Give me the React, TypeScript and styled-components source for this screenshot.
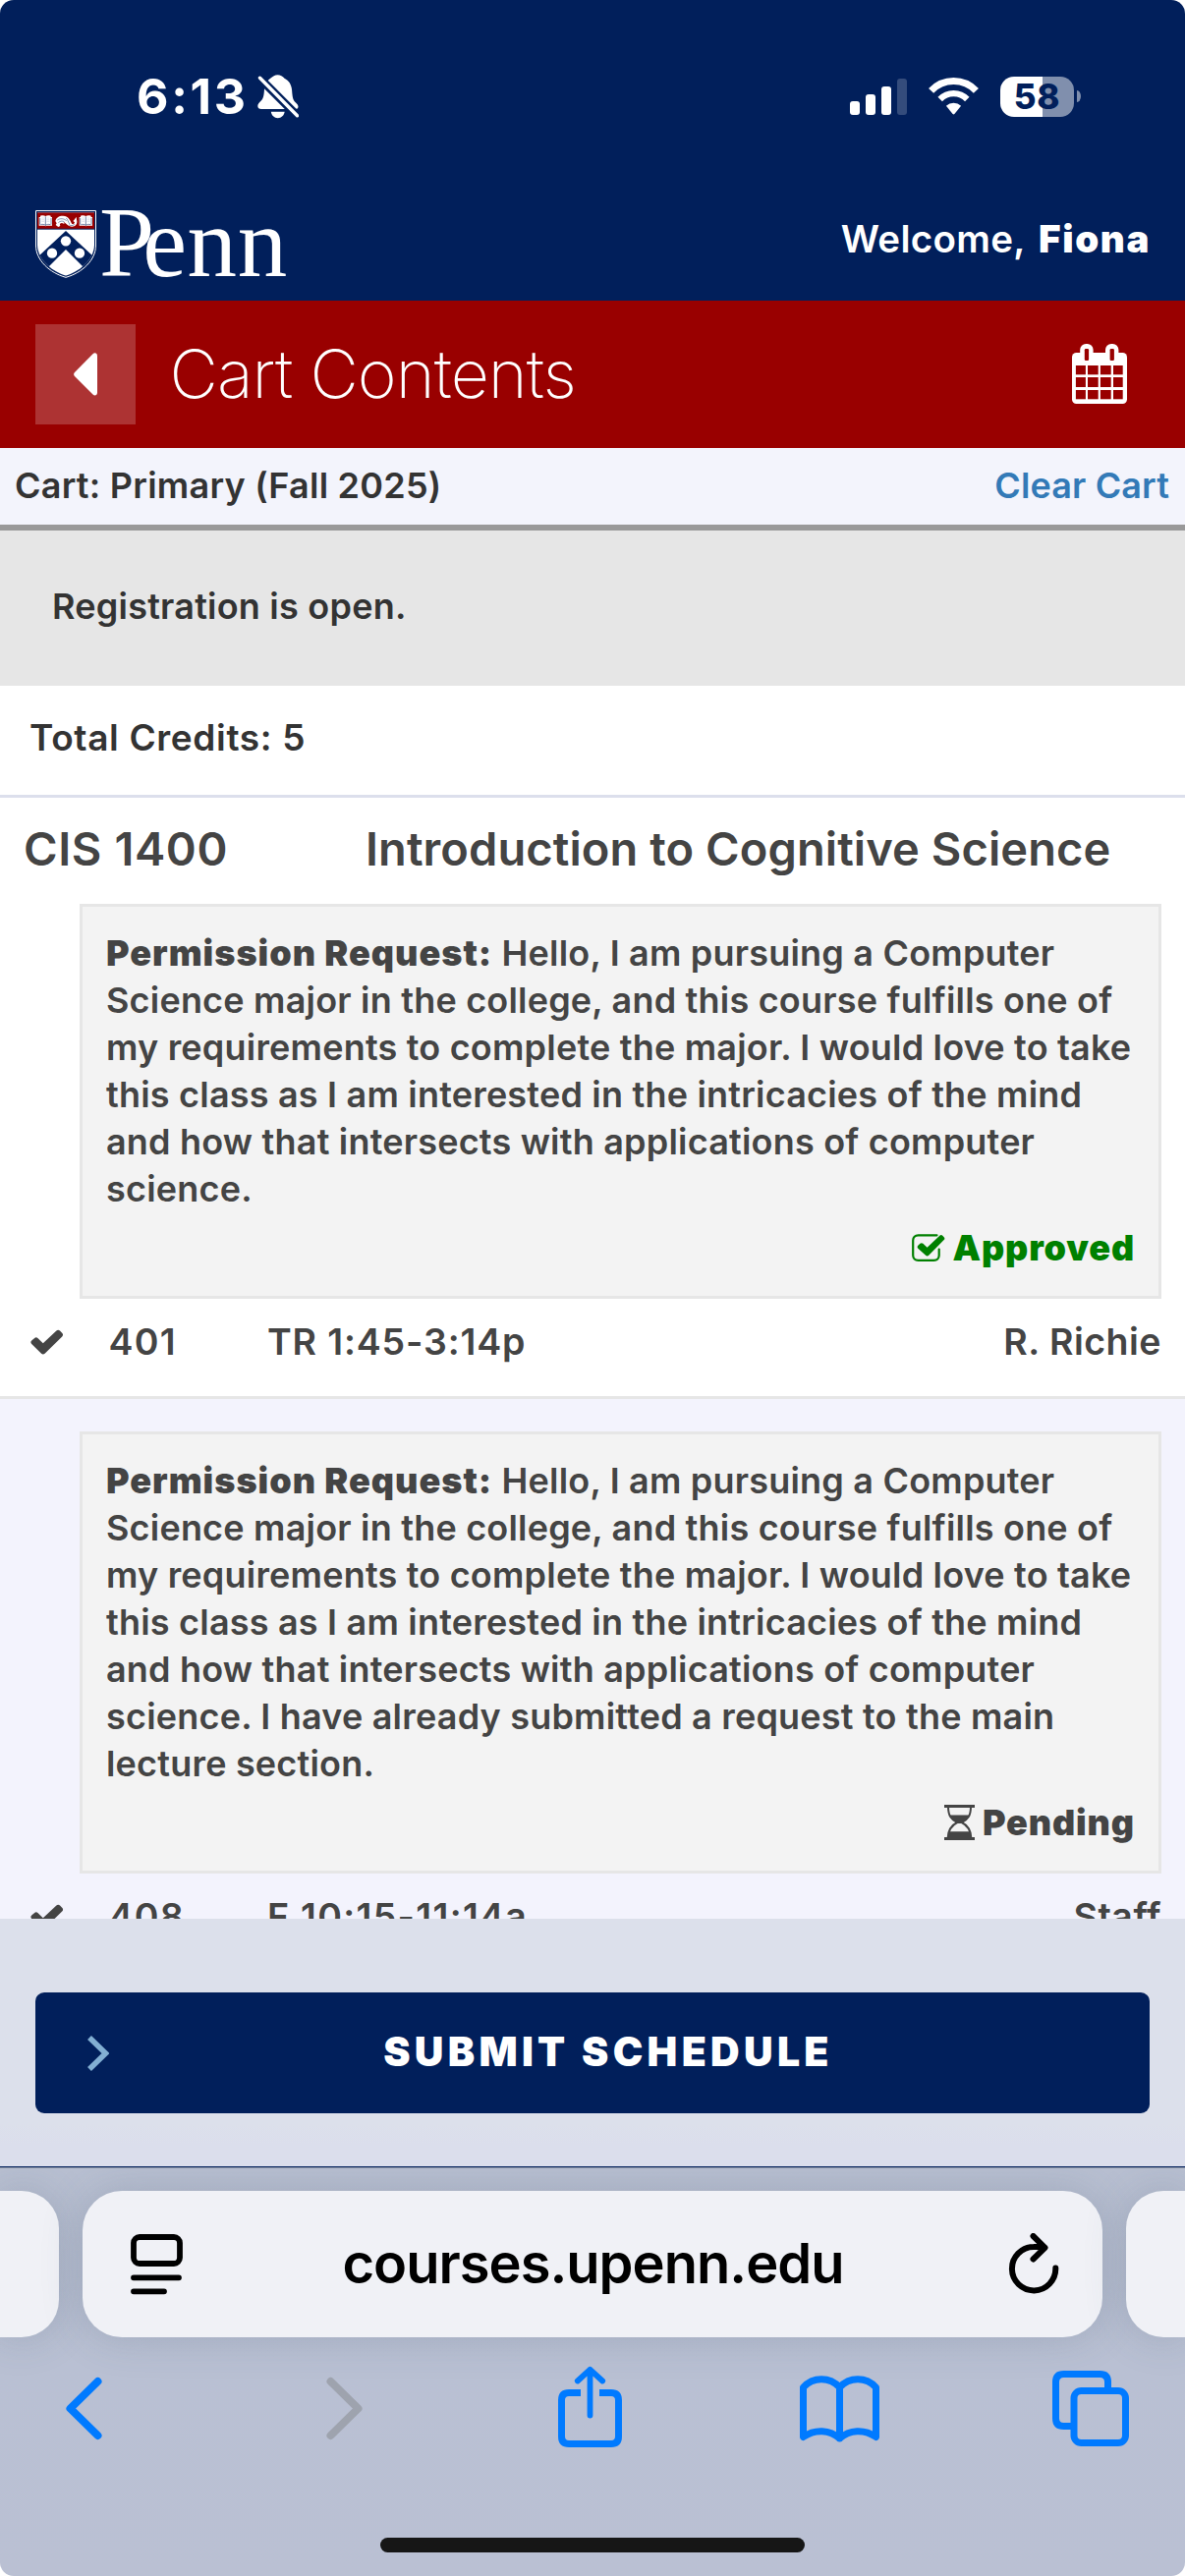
import React from 'react';
import styled, { createGlobalStyle } from 'styled-components';

const navy = '#011f5b';
const ink = '#444444';
const blue = '#007aff';

const GlobalStyle = createGlobalStyle`
  html, body { margin: 0; padding: 0; background: #ffffff; }
  *, *::before, *::after { box-sizing: border-box; }
  body { font-family: Inter, 'Liberation Sans', sans-serif; font-weight: 600; }
`;

const Screen = styled.div`
  width: 1206px;
  height: 2622px;
  display: flex;
  flex-direction: column;
  overflow: hidden;
  border-radius: 14px;
  background: #ffffff;
`;

/* ---------- header ---------- */

const Header = styled.header`
  height: 306px;
  flex: none;
  background: ${navy};
  color: #ffffff;
`;

const StatusBar = styled.div`
  height: 190px;
  padding: 6px 106px 0 139px;
  display: flex;
  align-items: center;
`;

const Clock = styled.span`
  width: 123px;
  font-size: 50px;
  font-weight: 700;
  letter-spacing: 2.7px;
  line-height: 60px;
`;

const StatusIcons = styled.div`
  margin-left: auto;
  display: flex;
  align-items: center;
`;

const SignalIcon = styled.svg`
  margin-right: 22px;
`;

const WifiIcon = styled.svg`
  margin-right: 22px;
`;

const Battery = styled.div`
  width: 75px;
  height: 41px;
  border-radius: 14px;
  background: linear-gradient(to right, #ffffff 43px, #808fad 43px);
  color: ${navy};
  display: flex;
  align-items: center;
  justify-content: center;
  font-size: 35px;
  font-weight: 800;
  letter-spacing: 0.6px;
  line-height: 41px;
`;

const BatteryTip = styled.div`
  width: 4px;
  height: 12px;
  margin-left: 3px;
  border-radius: 0 4px 4px 0 / 0 6px 6px 0;
  background: #808fad;
`;

const BrandRow = styled.div`
  height: 116px;
  padding: 0 35px 0 36px;
  display: flex;
  align-items: center;
`;

const Wordmark = styled.span`
  display: inline-block;
  margin: 0 auto 2px 3px;
  font-family: 'Liberation Serif', serif;
  font-weight: 400;
  font-size: 101px;
  line-height: 112px;
  letter-spacing: 0.6px;
  &::first-letter { letter-spacing: -12px; }
`;

const Welcome = styled.span`
  margin-bottom: 10px;
  font-size: 38.5px;
  line-height: 46px;
  letter-spacing: 0.3px;
`;

const UserName = styled.strong`
  margin-left: 4px;
  font-weight: 900;
  letter-spacing: 1.6px;
`;

/* ---------- title bar ---------- */

const TitleBar = styled.div`
  height: 150px;
  flex: none;
  padding: 0 59px 0 36px;
  display: flex;
  align-items: center;
  background: #990000;
  color: #ffffff;
`;

const BackButton = styled.button`
  width: 102px;
  height: 102px;
  padding: 0;
  border: 0;
  background: #ad3333;
  display: flex;
  align-items: center;
  justify-content: center;
`;

const Title = styled.h1`
  margin: 0 auto 2px 34.5px;
  font-size: 68px;
  font-weight: 200;
  letter-spacing: -0.93px;
  line-height: 82px;
`;

const CartBar = styled.div`
  height: 84px;
  flex: none;
  padding: 0 16px 2px 15px;
  display: flex;
  align-items: center;
  justify-content: space-between;
  background: #f3f4fc;
  border-bottom: 6px solid #999999;
  font-size: 36px;
  letter-spacing: 0.24px;
  line-height: 44px;
  color: #333333;
`;

const ClearLink = styled.a`
  color: #337ab7;
  letter-spacing: 0.12px;
`;

/* ---------- scrolling content ---------- */

const Scroller = styled.main`
  height: 1413px;
  flex: none;
  overflow: hidden;
  color: ${ink};
`;

const Notice = styled.div`
  height: 158px;
  padding: 0 53px 5px;
  display: flex;
  align-items: center;
  background: #e6e6e6;
  color: #333333;
  font-size: 36px;
  letter-spacing: 0.22px;
  line-height: 44px;
`;

const Credits = styled.div`
  height: 114px;
  padding: 0 30px 5px;
  display: flex;
  align-items: center;
  border-bottom: 3px solid #dcdfec;
  color: #333333;
  font-size: 37px;
  letter-spacing: 0.64px;
  line-height: 44px;
`;

const CourseHeading = styled.h2`
  margin: 0;
  height: 108px;
  padding: 0 0 4px 24px;
  display: grid;
  grid-template-columns: 348px 1fr;
  align-items: center;
  font-size: 47px;
  font-weight: 600;
  line-height: 56px;
  letter-spacing: 0.08px;
`;

const CourseCode = styled.span`
  letter-spacing: 0.6px;
`;

const Section = styled.section<{ $alt?: boolean }>`
  padding-top: ${p => (p.$alt ? 33 : 0)}px;
  background: ${p => (p.$alt ? '#f3f3fd' : '#ffffff')};
  border-bottom: 3px solid #e6e6e6;
`;

const RequestBox = styled.div`
  margin: 0 24px 0 81px;
  padding: 23px 20px 25px 24px;
  border: 3px solid #e6e6e6;
  background: #f3f3f3;
`;

const RequestText = styled.p`
  margin: 0;
  font-size: 36px;
  line-height: 48px;
  letter-spacing: 0.2px;
`;

const RequestLabel = styled.strong`
  font-weight: 900;
  letter-spacing: 1px;
`;

const Status = styled.div<{ $color: string }>`
  margin-top: 12px;
  padding-right: 4px;
  display: flex;
  justify-content: flex-end;
  align-items: center;
  gap: 8px;
  color: ${p => p.$color};
  font-size: 36px;
  font-weight: 900;
  line-height: 48px;
  letter-spacing: 0.85px;
`;

const SectionRow = styled.div`
  height: 99px;
  padding: 0 24px 11px 31px;
  display: grid;
  grid-template-columns: 79.5px 161.5px 1fr auto;
  align-items: center;
  font-size: 37.5px;
  line-height: 46px;
`;

const SectionNumber = styled.span`
  letter-spacing: 1.3px;
`;

const MeetingTime = styled.span<{ $tracking: number }>`
  letter-spacing: ${p => p.$tracking}px;
`;

const Teacher = styled.span`
  letter-spacing: 0.5px;
`;

/* ---------- submit footer ---------- */

const Footer = styled.div`
  height: 253px;
  flex: none;
  padding: 75px 36px 0;
  background: linear-gradient(#dce0eb 208px, #dbdeec 230px);
  border-bottom: 1px solid ${navy};
`;

const SubmitButton = styled.button`
  width: 1134px;
  height: 123px;
  padding: 0 43px 3px 53px;
  border: 0;
  border-radius: 9px;
  display: flex;
  align-items: center;
  background: ${navy};
  color: #ffffff;
  font-family: inherit;
  font-size: 41px;
  font-weight: 900;
  letter-spacing: 4.3px;
`;

const SubmitLabel = styled.span`
  flex: 1;
  text-align: center;
`;

const SubmitChevron = styled.svg`
  margin-top: 4px;
`;

/* ---------- browser toolbar ---------- */

const Browser = styled.nav`
  flex: 1;
  border-top: 1px solid #8b95a6;
  background: linear-gradient(#b8bfd1, #b9c0d3 200px, #bac0d3);
  display: flex;
  flex-direction: column;
  align-items: center;
  overflow: hidden;
`;

const TabStrip = styled.div`
  width: 1206px;
  margin-top: 23px;
  display: flex;
  gap: 24px;
`;

const SideTab = styled.div<{ $side: 'left' | 'right' }>`
  width: 60px;
  height: 149px;
  border-radius: ${p => (p.$side === 'left' ? '0 38px 38px 0' : '38px 0 0 38px')};
  background: #f0f1f6;
  box-shadow: 0 0 42px rgba(70, 85, 110, 0.22);
`;

const AddressBar = styled.div`
  width: 1038px;
  height: 149px;
  padding: 0 44px 0 48px;
  border-radius: 40px;
  background: #f0f1f6;
  box-shadow: 0 0 42px rgba(70, 85, 110, 0.22);
  display: flex;
  align-items: center;
  justify-content: space-between;
  color: #000000;
`;

const Address = styled.span`
  margin: 0 6px 2px 0;
  font-size: 56px;
  letter-spacing: -0.98px;
  line-height: 68px;
`;

const ToolRow = styled.div`
  width: 1206px;
  margin-top: 26px;
  padding-left: 63px;
  display: grid;
  grid-template-columns: 265px 236px 246px 257px 86px;
  height: 94px;
`;

const HomeIndicator = styled.div`
  width: 432px;
  height: 15px;
  margin-top: 84px;
  border-radius: 8px;
  background: #161616;
`;

/* ---------- drawings ---------- */

const BellOff = () => (
  <svg width="42" height="46" viewBox="262 75 42 46">
    <path
      fill="#fff"
      d="M275.5 79.5C278 77.5 279.5 76.2 282.5 76.2s5 1.300 7 3.600c4.500 2.200 7 6 7.600 12 .5 6 .6 9.500 3.400 12.200 1.800 1.700 3 3 3 4.500 0 1.700-1 2.500-3 2.500H266c-2.300 0-3.700-1-3.700-3 0-2 1.400-3.200 3.200-5.200 2.300-2.500 3-4.800 3.400-10.600.3-6 2-9.700 6.600-12.700z"
    />
    <path fill="#fff" d="M275.800 113.800h13.900c-.5 3.700-3.400 6.400-7 6.400s-6.400-2.700-6.900-6.400z" />
    <path d="M260 75.200l46 46" stroke={navy} strokeWidth="8.500" />
    <path d="M264.500 79.200l38 38.600" stroke="#fff" strokeWidth="3.400" strokeLinecap="round" />
  </svg>
);

const Shield = () => (
  <svg width="62" height="69" viewBox="18 18 186 207">
    <defs>
      <clipPath id="inner-shield">
        <path d="M24 25H198V124C198 165 158 203 111 218C64 203 24 165 24 124Z" />
      </clipPath>
    </defs>
    <path d="M19.500 19.500H202.500V126C202.500 170 161 209 111 223C61 209 19.500 170 19.500 126Z" fill={navy} stroke="#fff" strokeWidth="3" />
    <g clipPath="url(#inner-shield)">
      <rect x="18" y="18" width="190" height="210" fill="#fff" />
      <rect x="18" y="24" width="190" height="51" fill="#990000" />
      <rect x="18" y="74" width="190" height="3" fill={navy} />
      <path d="M111 81L14 171L42 207L111 138L180 207L208 171Z" fill={navy} />
      <circle cx="111" cy="112" r="15.500" fill="#fff" />
      <circle cx="69" cy="149" r="15.500" fill="#fff" />
      <circle cx="153" cy="149" r="15.500" fill="#fff" />
    </g>
    {[29, 152].map(x => (
      <g key={x} transform={`translate(${x} 34)`}>
        <path d="M0 5h4V1c6-2 12-2 16 1c4-3 10-3 16-1v4h4v26H24l-4 2-4-2H0z" fill="#fff" />
        <path d="M20 3v27M5 28c6-2 11-1 15 2c4-3 9-4 15-2M3 8v20M37 8v20" stroke={navy} strokeWidth="1.600" fill="none" />
        <path d="M8 8h8M8 13h8M8 18h8M24 8h8M24 13h8M24 18h8" stroke="#9aa6c0" strokeWidth="1" />
      </g>
    ))}
    <path
      d="M79 51C81 40 92 34 103 35C118 36 124 47 128 57C131 63 137 61 138 55L133 51L138 46C139 43 141 41 144 39C143 43 144 47 145 51C146 61 140 68 130 68C117 68 113 57 104 54L107 60L99 57C94 57 91 60 94 66L88 69L80 63L83 58Z"
      fill="#fff"
    />
    <path d="M85 48c9-6 20-5 28 2M88 56c5-5 12-6 18-3M112 42c5 5 7 12 10 18M120 62c6 4 12 4 18-1" stroke={navy} strokeWidth="1.400" fill="none" />
  </svg>
);

const Calendar = () => (
  <svg width="56" height="62" viewBox="1091 350 56 62">
    <rect x="1091" y="359" width="56" height="52" rx="4.500" fill="#fff" />
    {[1099.200, 1125].map(x => (
      <g key={x}>
        <rect x={x} y="350" width="13.400" height="20" rx="6" fill="#fff" />
        <rect x={x + 4.600} y="355" width="4.300" height="12" rx="1.200" fill="#990000" />
      </g>
    ))}
    {[[1094.900, 10], [1107, 10.700], [1119.900, 10.800], [1133, 9.700]].map(([x, w]) =>
      [[372, 9.300], [384, 10], [397, 9.300]].map(([y, h]) => (
        <rect key={`${x}-${y}`} x={x} y={y} width={w} height={h} fill="#990000" />
      )),
    )}
  </svg>
);

const Check = () => (
  <svg width="34" height="26" viewBox="31 1353 34 26">
    <path
      d="M32.200 1364.600l3-2.700c1-.9 2.200-.9 3.200.1l5.400 5.200 13.600-12.700c1.200-1.100 2.500-1.100 3.600 0l2.400 2.600c1 1.200.9 2.300-.2 3.400l-17.600 17.200c-1.200 1.100-2.400 1.100-3.500 0l-9.900-9.700c-1.100-1.200-1.100-2.300 0-3.400z"
      fill={ink}
    />
  </svg>
);

const ApprovedIcon = () => (
  <svg width="34" height="28" viewBox="0 0 34 28">
    <path d="M25.500 1.300H6.500C3.300 1.300 1.200 3.400 1.200 6.500v15.200c0 3.100 2.100 5.200 5.300 5.200h16c3.100 0 5.200-2.100 5.200-5.200V15.500" fill="none" stroke="#008000" strokeWidth="2.200" strokeLinecap="round" />
    <path d="M6.300 11.800l2.100-2c1-.9 2-.9 3 0l4.200 4L28.300 1.700c1-.9 2-.9 3 0l1.400 1.500c.9 1 .9 2 0 2.900L17.200 21.700c-1 .9-2.100.9-3.100 0L6.300 14.700c-.9-1-.9-2 0-2.900z" fill="#008000" />
  </svg>
);

const Hourglass = () => (
  <svg width="31" height="36" viewBox="0 0 31 36">
    <path d="M0 0h31v3H0zM0 33h31v3H0z" fill={ink} />
    <path d="M4 2c0 9 3 13 9.200 16C7 21 4 26 3.600 34M27 2c0 9-3 13-9.200 16C24 21 27 26 27.400 34" fill="none" stroke={ink} strokeWidth="2" />
    <path d="M5.500 10.500h20c-1.500 3-4.500 5.500-7.500 7.500v1h-5v-1c-3-2-6-4.500-7.500-7.500zM4 27.300h23l.6 6H3.400z" fill={ink} />
  </svg>
);

const Signal = () => (
  <SignalIcon width="58" height="37" viewBox="865 79 58 37">
    <rect x="865" y="102" width="10" height="14" rx="3" fill="#fff" />
    <rect x="881" y="95" width="10" height="21" rx="3" fill="#fff" />
    <rect x="897" y="87" width="10" height="29" rx="3" fill="#fff" />
    <rect x="913" y="79" width="10" height="37" rx="3" fill="#344c7c" />
  </SignalIcon>
);

const Wifi = () => (
  <WifiIcon width="51" height="38" viewBox="-25.500 -35 51 38">
    <path d="M-22.900-21.600A31.500 31.500 0 0 1 22.900-21.600" fill="none" stroke="#fff" strokeWidth="7" />
    <path d="M-13.800-13A19 19 0 0 1 13.800-13" fill="none" stroke="#fff" strokeWidth="6.200" />
    <path d="M-7.600-6.200A11 11 0 0 1 7.600-6.200L.9 2Q0 2.900-.9 2Z" fill="#fff" />
  </WifiIcon>
);

/* ---------- page ---------- */

const requestBase =
  'Hello, I am pursuing a Computer Science major in the college, and this course fulfills one of my requirements to complete the major. I would love to take this class as I am interested in the intricacies of the mind and how that intersects with applications of computer science.';

const sections = [
  { number: '401', time: 'TR 1:45-3:14p', tracking: 0.85, teacher: 'R. Richie', text: requestBase, approved: true },
  {
    number: '408',
    time: 'F 10:15-11:14a',
    tracking: 1.3,
    teacher: 'Staff',
    text: `${requestBase} I have already submitted a request to the main lecture section.`,
    approved: false,
  },
];

export default function App() {
  return (
    <>
      <GlobalStyle />
      <Screen>
        <Header>
          <StatusBar>
            <Clock>6:13</Clock>
            <BellOff />
            <StatusIcons>
              <Signal />
              <Wifi />
              <Battery>58</Battery>
              <BatteryTip />
            </StatusIcons>
          </StatusBar>
          <BrandRow>
            <Shield />
            <Wordmark>Penn</Wordmark>
            <Welcome>
              Welcome, <UserName>Fiona</UserName>
            </Welcome>
          </BrandRow>
        </Header>

        <TitleBar>
          <BackButton aria-label="Back">
            <svg width="24" height="44" viewBox="0 0 24 44">
              <path d="M19.500 1.300L1 20c-1.200 1.300-1.200 2.700 0 4L19.500 42.600c1.900 1.800 4.500.9 4.500-2V3.300c0-2.900-2.600-3.800-4.500-2z" fill="#fff" />
            </svg>
          </BackButton>
          <Title>Cart Contents</Title>
          <Calendar />
        </TitleBar>

        <CartBar>
          <span>Cart: Primary (Fall 2025)</span>
          <ClearLink>Clear Cart</ClearLink>
        </CartBar>

        <Scroller>
          <Notice>Registration is open.</Notice>
          <Credits>Total Credits: 5</Credits>
          <CourseHeading>
            <CourseCode>CIS 1400</CourseCode>
            <span>Introduction to Cognitive Science</span>
          </CourseHeading>
          {sections.map((s, i) => (
            <Section key={s.number} $alt={i % 2 === 1}>
              <RequestBox>
                <RequestText>
                  <RequestLabel>Permission Request:</RequestLabel> {s.text}
                </RequestText>
                <Status $color={s.approved ? '#008000' : ink}>
                  {s.approved ? <ApprovedIcon /> : <Hourglass />}
                  {s.approved ? 'Approved' : 'Pending'}
                </Status>
              </RequestBox>
              <SectionRow>
                <Check />
                <SectionNumber>{s.number}</SectionNumber>
                <MeetingTime $tracking={s.tracking}>{s.time}</MeetingTime>
                <Teacher>{s.teacher}</Teacher>
              </SectionRow>
            </Section>
          ))}
        </Scroller>

        <Footer>
          <SubmitButton>
            <SubmitChevron width="22" height="36" viewBox="0 0 22 36">
              <path d="M2 2l16.500 16L2 34" fill="none" stroke="#82afd3" strokeWidth="5.600" />
            </SubmitChevron>
            <SubmitLabel>SUBMIT SCHEDULE</SubmitLabel>
          </SubmitButton>
        </Footer>

        <Browser>
          <TabStrip>
            <SideTab $side="left" />
            <AddressBar>
              <svg width="55" height="62" viewBox="132 2274 55 62" fill="none" stroke="#000" strokeWidth="5.800" strokeLinecap="round">
                <rect x="136" y="2277" width="47" height="27" rx="6" />
                <path d="M136 2318.300h46M136 2332.300h31" />
              </svg>
              <Address>courses.upenn.edu</Address>
              <svg width="52" height="64" viewBox="1026 2271 52 64" fill="none" stroke="#000" strokeWidth="6" strokeLinecap="round" strokeLinejoin="round">
                <path d="M1074.300 2306.500A22.200 22.200 0 1 1 1052 2285q6-.3 11.500.8M1051.500 2274l12 11.800-12 11.700" />
              </svg>
            </AddressBar>
            <SideTab $side="right" />
          </TabStrip>
          <ToolRow>
            <svg width="45" height="94" viewBox="63 2405 45 94" fill="none" stroke={blue} strokeWidth="8" strokeLinecap="round" strokeLinejoin="round">
              <path d="M99.500 2424L71.500 2451.500l28 27.500" />
            </svg>
            <svg width="45" height="94" viewBox="328 2405 45 94" fill="none" stroke="#9ea3ae" strokeWidth="8" strokeLinecap="round" strokeLinejoin="round">
              <path d="M336.500 2424l28 27.500-28 27.500" />
            </svg>
            <svg width="73" height="94" viewBox="564 2405 73 94" fill="none" stroke={blue} strokeWidth="7" strokeLinejoin="round">
              <path d="M591 2435.500h-12q-7.500 0-7.500 7.500v37q0 7.500 7.500 7.500h43q7.500 0 7.500-7.500v-37q0-7.500-7.500-7.500h-12" />
              <path d="M600.500 2412v46.500M587.800 2423.500l12.700-11.700 12.700 11.700" strokeWidth="5.800" strokeLinecap="round" />
            </svg>
            <svg width="89" height="94" viewBox="810 2405 89 94" fill="none" stroke={blue} strokeWidth="7" strokeLinejoin="round" strokeLinecap="round">
              <path d="M817.500 2480.500v-50.500c10-11 27-11 37 0v52c-10-9-25-10-37-1.500zM891.500 2480.500v-50.500c-10-11-27-11-37 0v52c10-9 25-10 37-1.500z" />
            </svg>
            <svg width="86" height="94" viewBox="1067 2405 86 94" fill="none" stroke={blue} strokeWidth="7">
              <rect x="1093" y="2433.500" width="52.500" height="53" rx="7.500" />
              <path d="M1127.500 2432v-7.500q0-8-8-8h-37q-8 0-8 8v37q0 8 8 8h9" />
            </svg>
          </ToolRow>
          <HomeIndicator />
        </Browser>
      </Screen>
    </>
  );
}
